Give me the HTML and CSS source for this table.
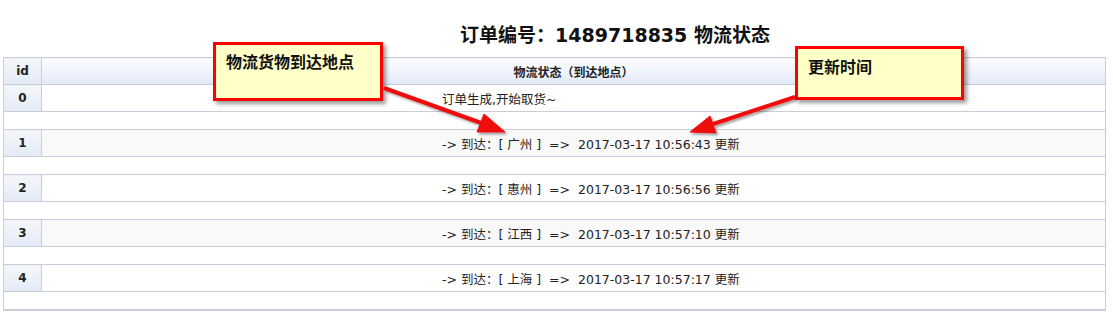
FILE: index.html
```html
<!DOCTYPE html>
<html lang="zh-CN">
	<head>
		<meta charset="UTF-8">
		<title>
			物流状态
		</title>
		<link rel="stylesheet" href="styles.css">
	</head>
	<body>
		<div class="page">
			<h3 class="title">订单编号：<span class="num">1489718835</span> 物流状态</h3>
			<table class="logistics">
				<thead>
					<tr>
						<th class="col-id">id</th>
						<th>物流状态（到达地点）</th>
					</tr>
				</thead>
				<tbody>
					<tr>
						<td class="col-id">0</td>
						<td class="info">订单生成,开始取货~</td>
					</tr>
					<tr class="gap"><td colspan="2"></td></tr>
					<tr class="odd">
						<td class="col-id">1</td>
						<td class="info">-&gt; 到达：[ 广州 ]&nbsp; =&gt;&nbsp; 2017-03-17 10:56:43 更新</td>
					</tr>
					<tr class="gap"><td colspan="2"></td></tr>
					<tr>
						<td class="col-id">2</td>
						<td class="info">-&gt; 到达：[ 惠州 ]&nbsp; =&gt;&nbsp; 2017-03-17 10:56:56 更新</td>
					</tr>
					<tr class="gap"><td colspan="2"></td></tr>
					<tr class="odd">
						<td class="col-id">3</td>
						<td class="info">-&gt; 到达：[ 江西 ]&nbsp; =&gt;&nbsp; 2017-03-17 10:57:10 更新</td>
					</tr>
					<tr class="gap"><td colspan="2"></td></tr>
					<tr>
						<td class="col-id">4</td>
						<td class="info">-&gt; 到达：[ 上海 ]&nbsp; =&gt;&nbsp; 2017-03-17 10:57:17 更新</td>
					</tr>
					<tr class="gap"><td colspan="2"></td></tr>
				</tbody>
			</table>

			<!-- 说明标注 -->
			<div class="note note-place">物流货物到达地点</div>
			<div class="note note-time">更新时间</div>
			<svg class="arrows" width="1113" height="317" viewBox="0 0 1113 317">
				<defs>
					<filter id="shadow" x="-20%" y="-50%" width="140%" height="200%">
						<feDropShadow dx="2" dy="2" stdDeviation="1.2" flood-color="#000" flood-opacity="0.35"/>
					</filter>
				</defs>
				<g filter="url(#shadow)" fill="#ee1111" stroke="#ee1111">
					<line x1="384" y1="88" x2="484" y2="124" stroke-width="4"/>
					<polygon points="505,132 477,132 484,114" stroke-width="1"/>
					<line x1="795" y1="97" x2="710" y2="125" stroke-width="4"/>
					<polygon points="690,132 716,133 710,116" stroke-width="1"/>
				</g>
			</svg>
		</div>
	</body>
</html>
```

FILE: styles.css
```css
* { padding: 0; margin: 0; }
body {
	font: 12.5px "DejaVu Sans", "Noto Sans CJK SC", sans-serif;
	color: #222;
	background: #fff;
}
.page {
	position: relative;
	width: 1113px;
	padding-top: 20px;
}
/*标题*/
.title {
	padding-left: 117px;
	height: 22px;
	line-height: 22px;
	font: bold 19px "DejaVu Sans", "Noto Sans CJK SC", sans-serif;
	text-align: center;
	color: #111;
}
/*表格*/
.logistics {
	margin: 15px 0 0 3px;
	width: 1103px;
	border-collapse: collapse;
	border: 1px solid #c8cdd8;
	border-bottom-width: 2px;
}
.logistics th,
.logistics td {
	border: 1px solid #c8cdd8;
	height: 26px;
	padding: 0;
	vertical-align: middle;
}
.logistics th {
	font-size: 12px;
	font-weight: bold;
	text-align: center;
	background: linear-gradient(#fdfdfe, #e2eaf8);
}
.logistics .col-id {
	width: 37px;
	text-align: center;
	font-size: 12px;
	font-weight: bold;
	background: linear-gradient(#f5f6f8, #e3ebf8);
}
/*内容靠左，前面留空*/
.logistics .info {
	padding-left: 400px;
	white-space: nowrap;
}
.logistics .odd .info {
	background: #f9f9f9;
}
.logistics .gap td {
	height: 17px;
	background: #fff;
}
/*黄色标注框*/
.note {
	position: absolute;
	box-sizing: border-box;
	border: 3px solid #f00;
	background: #ffffc8;
	box-shadow: 3px 3px 4px rgba(0, 0, 0, 0.4);
	font: bold 16px "Noto Sans CJK SC", sans-serif;
	line-height: 20px;
	color: #111;
	padding: 6px 0 0 10px;
}
.note-place {
	left: 213px;
	top: 42px;
	width: 170px;
	height: 59px;
}
.note-time {
	left: 795px;
	top: 46px;
	width: 169px;
	height: 54px;
	padding-top: 7px;
}
.arrows {
	position: absolute;
	left: 0;
	top: 0;
	pointer-events: none;
}
```
